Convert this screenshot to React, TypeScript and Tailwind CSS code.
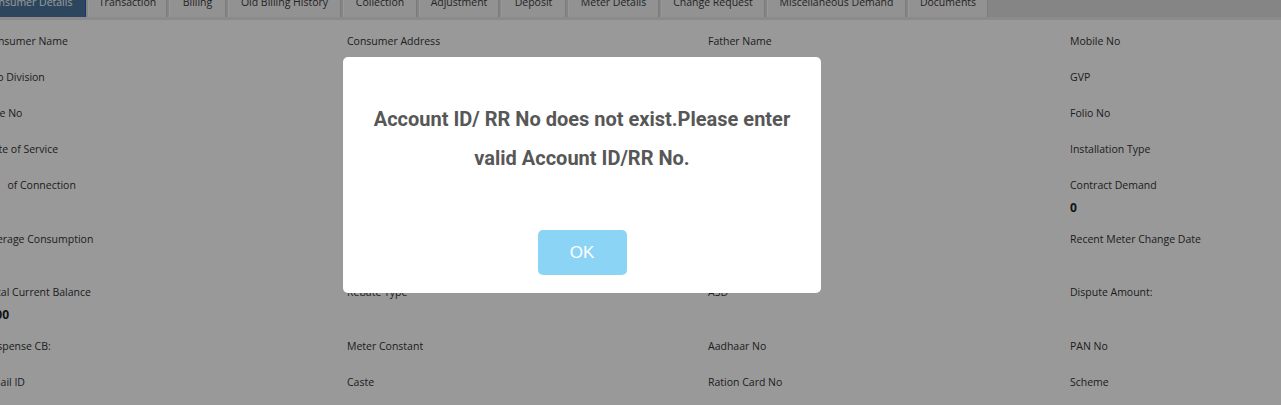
import React from 'react';

interface Tab {
  name: string;
  width: string;
  active?: boolean;
}

interface Field {
  label: string;
  value?: string;
}

interface FieldRow {
  fields: Field[];
  withValue?: boolean;
  pad: string;
}

const tabs: Tab[] = [
  { name: 'Consumer Details', width: 'w-[113px]', active: true },
  { name: 'Transaction', width: 'w-[79px]' },
  { name: 'Billing', width: 'w-[57px]' },
  { name: 'Old Billing History', width: 'w-[113px]' },
  { name: 'Collection', width: 'w-[74px]' },
  { name: 'Adjustment', width: 'w-[80px]' },
  { name: 'Deposit', width: 'w-[65px]' },
  { name: 'Meter Details', width: 'w-[91px]' },
  { name: 'Change Request', width: 'w-[104px]' },
  { name: 'Miscellaneous Demand', width: 'w-[139px]' },
  { name: 'Documents', width: 'w-[80px]' },
];

const rows: FieldRow[] = [
  { pad: 'pb-[18px]', fields: [{ label: 'Consumer Name' }, { label: 'Consumer Address' }, { label: 'Father Name' }, { label: 'Mobile No' }] },
  { pad: 'pb-[18px]', fields: [{ label: 'Sdo Division' }, { label: 'Sub Division' }, { label: 'Section' }, { label: 'GVP' }] },
  { pad: 'pb-[18px]', fields: [{ label: 'Line No' }, { label: 'Tariff' }, { label: 'Meter No' }, { label: 'Folio No' }] },
  { pad: 'pb-[18px]', fields: [{ label: 'Date of Service' }, { label: 'Sanction Load' }, { label: 'Connected Load' }, { label: 'Installation Type' }] },
  {
    pad: 'pb-[13px]',
    withValue: true,
    fields: [{ label: 'No   of Connection' }, { label: 'Phase' }, { label: 'Status' }, { label: 'Contract Demand', value: '0' }],
  },
  {
    pad: 'pb-[12px]',
    withValue: true,
    fields: [{ label: 'Average Consumption' }, { label: 'Last Bill Date' }, { label: 'Last Paid Date' }, { label: 'Recent Meter Change Date' }],
  },
  {
    pad: 'pb-[13px]',
    withValue: true,
    fields: [{ label: 'Total Current Balance', value: '0.00' }, { label: 'Rebate Type' }, { label: 'ASD' }, { label: 'Dispute Amount:' }],
  },
  { pad: 'pb-[18px]', fields: [{ label: 'Suspense CB:' }, { label: 'Meter Constant' }, { label: 'Aadhaar No' }, { label: 'PAN No' }] },
  { pad: 'pb-[18px]', fields: [{ label: 'Email ID' }, { label: 'Caste' }, { label: 'Ration Card No' }, { label: 'Scheme' }] },
];

const App: React.FC = () => {
  return (
    <div className="relative w-screen h-screen overflow-hidden bg-white font-['Open_Sans',sans-serif] text-[#333]">
      {/* Tab bar (page scrolled a little down and right) */}
      <div className="-mt-[11px] bg-[#dedede] border-b-[3px] border-[#e8e8e8]">
        <div className="flex gap-[2px] -ml-[27px] h-[28px]">
          {tabs.map((tab) => (
            <div
              key={tab.name}
              className={
                tab.active
                  ? `${tab.width} shrink-0 flex items-center justify-center bg-[#4a769d] text-white border-r border-[#3050c8] text-[10.5px]`
                  : `${tab.width} shrink-0 flex items-center justify-center bg-[#f3f3f3] text-[#3c3c3c] border-l border-r border-l-white border-r-[#cfcfcf] text-[10.5px]`
              }
            >
              {tab.name}
            </div>
          ))}
        </div>
      </div>

      {/* Consumer details grid */}
      <div className="pt-[12px] -ml-[15px]">
        {rows.map((row, i) => (
          <div key={i} className={`grid grid-cols-[362px_361px_362px_361px] ${row.pad}`}>
            {row.fields.map((f) => (
              <div key={f.label}>
                <div className="h-[18px] leading-[18px] text-[10.5px] whitespace-pre">{f.label}</div>
                {row.withValue && (
                  <div className="mt-[5px] h-[18px] leading-[18px] text-[12px] font-bold text-[#222]">
                    {f.value ?? ''}
                  </div>
                )}
              </div>
            ))}
          </div>
        ))}
      </div>

      {/* Overlay */}
      <div className="absolute inset-0 bg-black/40" />

      {/* Alert dialog */}
      <div className="absolute left-[343px] top-[57px] w-[478px] h-[236px] bg-white rounded-[5px] flex flex-col items-center pt-[43px] px-[17px]">
        <p className="text-center text-[20px] leading-[39px] font-bold text-[#575757] font-['Roboto',sans-serif]">
          Account ID/ RR No does not exist.Please enter
          <br />
          valid Account ID/RR No.
        </p>
        <button className="mt-[52px] w-[89px] h-[45px] rounded-[5px] bg-[#8cd4f5] text-white text-[17px] font-['Liberation_Sans',Arial,sans-serif]">
          OK
        </button>
      </div>
    </div>
  );
};

export default App;
